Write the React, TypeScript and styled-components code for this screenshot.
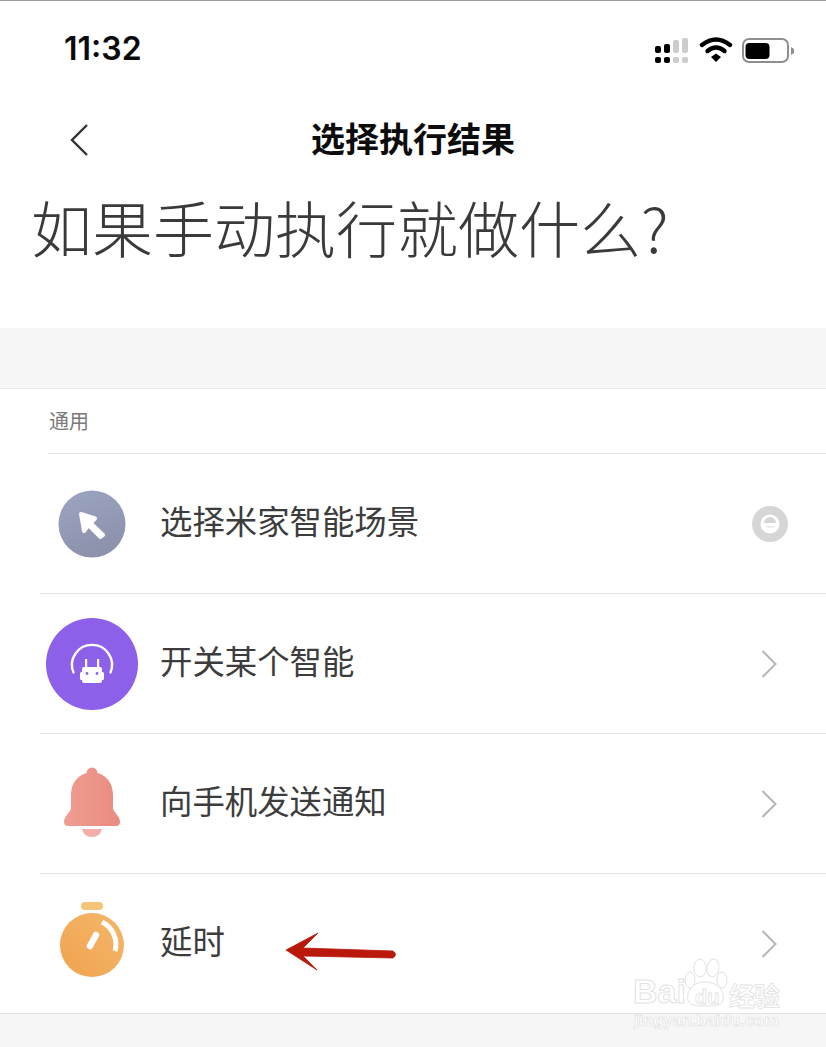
import React from "react";
import styled, { createGlobalStyle } from "styled-components";

const Global = createGlobalStyle`
  html, body { margin: 0; padding: 0; background: #fff; }
  body { font-family: "Noto Sans CJK SC", "Noto Sans", sans-serif; }
`;

const Page = styled.div`
  position: relative;
  width: 826px;
  height: 1047px;
  overflow: hidden;
  background: #f6f6f6;
  display: flex;
  flex-direction: column;
`;

const Header = styled.header`
  background: #fff;
  border-top: 1px solid #9a9a9a;
  height: 327px;
  display: flex;
  flex-direction: column;
`;

const StatusBar = styled.div`
  height: 79px;
  padding: 0 32px 0 64px;
  display: flex;
  align-items: center;
  justify-content: space-between;
`;

const Clock = styled.span`
  font-family: "Inter", "Liberation Sans", sans-serif;
  font-size: 32px;
  font-weight: 600;
  color: #0a0a0a;
  margin-top: 16px;
`;

const StatusIcons = styled.svg`
  display: block;
  margin-top: 18px;
`;

const NavBar = styled.div`
  height: 62px;
  margin-top: 27px;
  display: flex;
  align-items: center;
  justify-content: center;
  position: relative;
`;

const BackIcon = styled.svg`
  position: absolute;
  left: 68px;
  top: 16px;
`;

const Title = styled.h1`
  margin: 0;
  font-size: 34px;
  font-weight: 700;
  color: #0c0c0c;
  line-height: 62px;
`;

const Heading = styled.h2`
  margin: 22px 0 0;
  padding: 0 0 0 31px;
  font-size: 61px;
  font-weight: 300;
  color: #3a3a3a;
  line-height: 72px;
  white-space: nowrap;
`;

const Section = styled.section`
  margin-top: 60px;
  background: #fff;
  border-top: 1px solid #e8e8e8;
  border-bottom: 1px solid #e2e2e2;
`;

const SectionTitle = styled.div`
  margin-left: 48px;
  padding-left: 1px;
  height: 65px;
  box-sizing: border-box;
  border-bottom: 1px solid #e4e4e4;
  font-size: 20px;
  line-height: 64px;
  color: #7a7a7a;
`;

const Row = styled.div<{ $first?: boolean }>`
  height: 139px;
  margin-left: 40px;
  border-top: ${(p) => (p.$first ? "none" : "1px solid #e4e4e4")};
  display: flex;
  align-items: center;
  padding-right: 38px;
`;

const IconSlot = styled.div<{ $lift?: number }>`
  width: 104px;
  flex: none;
  display: flex;
  justify-content: center;
  margin-right: 16px;
  margin-bottom: ${(p) => p.$lift ?? 0}px;
  svg { display: block; }
`;

const Label = styled.span`
  flex: 1;
  font-size: 32.4px;
  color: #3c3c3c;
  line-height: 1;
  margin-bottom: 6px;
`;

const TrailingIcon = styled.svg`
  flex: none;
  display: block;
`;

const ChevronIcon = styled.svg`
  flex: none;
  display: block;
  margin-right: 11px;
`;

const ArrowOverlay = styled.svg`
  position: absolute;
  left: 280px;
  top: 925px;
`;

const Watermark = styled.div`
  position: absolute;
  left: 632px;
  top: 956px;
  width: 190px;
  height: 80px;
  pointer-events: none;
`;

const Paw = styled.svg`
  position: absolute;
  left: 0;
  top: 0;
`;

const WmBai = styled.span`
  position: absolute;
  left: 1px;
  top: 18px;
  font-family: "Liberation Sans", sans-serif;
  font-weight: 700;
  font-size: 34px;
  line-height: 34px;
  color: #fff;
  -webkit-text-stroke: 1px #e2e2e2;
`;

const WmDu = styled.span`
  position: absolute;
  left: 63px;
  top: 30px;
  font-family: "Liberation Sans", sans-serif;
  font-weight: 700;
  font-size: 20px;
  line-height: 22px;
  color: #fff;
  -webkit-text-stroke: 0.8px #e2e2e2;
`;

const WmJing = styled.span`
  position: absolute;
  left: 97px;
  top: 25px;
  font-size: 26px;
  font-weight: 700;
  line-height: 27px;
  letter-spacing: -1px;
  color: #fff;
  -webkit-text-stroke: 0.8px #e2e2e2;
`;

const WmUrl = styled.span`
  position: absolute;
  left: 2px;
  top: 54px;
  font-family: "Liberation Sans", sans-serif;
  font-size: 16.5px;
  line-height: 20px;
  font-weight: 700;
  color: #fff;
  -webkit-text-stroke: 0.7px #e2e2e2;
`;

const Chevron = () => (
  <ChevronIcon width="16" height="28" viewBox="0 0 16 28">
    <path d="M1.5 1 L14.5 14 L1.5 27" fill="none" stroke="#b5b5b5" strokeWidth="2" />
  </ChevronIcon>
);

export default function App() {
  return (
    <Page>
      <Global />
      <Header>
        <StatusBar>
          <Clock>11:32</Clock>
          <StatusIcons width="140" height="30" viewBox="0 0 140 30">
            <g fill="#000">
              <rect x="1" y="11" width="6" height="7" rx="2" />
              <rect x="10" y="9" width="6" height="9" rx="2" />
              <rect x="1" y="22" width="6" height="6" rx="2" />
              <rect x="10" y="22" width="6" height="6" rx="2" />
            </g>
            <g fill="#ccc">
              <rect x="19" y="5" width="6" height="13" rx="2" />
              <rect x="28" y="3" width="6" height="15" rx="2" />
              <rect x="19" y="22" width="6" height="6" rx="2" />
              <rect x="28" y="22" width="6" height="6" rx="2" />
            </g>
            <path d="M48 10 Q62 -1 76 10" fill="none" stroke="#000" strokeWidth="4.4" strokeLinecap="round" />
            <path d="M53.5 16 Q62 9 70.5 16" fill="none" stroke="#000" strokeWidth="4.4" strokeLinecap="round" />
            <path d="M57 22 L62 18.5 L67 22 L62 27 Z" fill="#000" />
            <rect x="89" y="4" width="45" height="23" rx="6" fill="none" stroke="#8e8e8e" strokeWidth="2" />
            <rect x="91.5" y="8" width="24" height="16" rx="4" fill="#000" />
            <path d="M137 12 L140 14 L140 18 L137 20 Z" fill="#8e8e8e" />
          </StatusIcons>
        </StatusBar>
        <NavBar>
          <BackIcon width="24" height="34" viewBox="0 0 24 34">
            <path d="M19 2 L4 17 L19 32" fill="none" stroke="#333" strokeWidth="2.4" />
          </BackIcon>
          <Title>选择执行结果</Title>
        </NavBar>
        <Heading>如果手动执行就做什么?</Heading>
      </Header>
      <Section>
        <SectionTitle>通用</SectionTitle>
        <Row $first>
          <IconSlot>
            <svg width="68" height="68" viewBox="0 0 68 68">
              <defs>
                <linearGradient id="g1" x1="0.3" y1="0" x2="0.7" y2="1">
                  <stop offset="0" stopColor="#9aa3bf" />
                  <stop offset="1" stopColor="#8b90aa" />
                </linearGradient>
              </defs>
              <circle cx="34" cy="34" r="33.5" fill="url(#g1)" />
              <path d="M23 24 L37 28.5 L32.5 33 L45 45 L42.5 47 L30.5 35 L26 41 Z" fill="#fff" stroke="#fff" strokeWidth="4" strokeLinejoin="round" />
            </svg>
          </IconSlot>
          <Label>选择米家智能场景</Label>
          <TrailingIcon width="36" height="36" viewBox="0 0 36 36">
            <circle cx="18" cy="18" r="18" fill="#d6d6d6" />
            <circle cx="18" cy="18" r="9.5" fill="#fff" />
            <path d="M12 17 A6 6 0 0 1 24 17 Z" fill="#d6d6d6" />
            <rect x="14" y="20" width="8" height="1.4" fill="#e6e6e6" />
          </TrailingIcon>
        </Row>
        <Row>
          <IconSlot>
            <svg width="92" height="92" viewBox="0 0 92 92">
              <circle cx="46" cy="46" r="46" fill="#8d60ea" />
              <path d="M27.5 54.5 A20 20 0 1 1 64.5 54.5" fill="none" stroke="#fff" strokeWidth="2.4" strokeLinecap="round" />
              <rect x="39" y="41" width="2.2" height="10" fill="#fff" />
              <rect x="51" y="41" width="2.2" height="10" fill="#fff" />
              <rect x="36" y="49" width="20" height="16" rx="2" fill="#fff" />
              <rect x="34" y="54" width="24" height="8" rx="1.5" fill="#fff" />
              <circle cx="41" cy="55.5" r="1.4" fill="#8d60ea" />
              <circle cx="51" cy="55.5" r="1.4" fill="#8d60ea" />
            </svg>
          </IconSlot>
          <Label>开关某个智能</Label>
          <Chevron />
        </Row>
        <Row>
          <IconSlot $lift={4}>
            <svg width="58" height="72" viewBox="0 0 58 72">
              <defs>
                <linearGradient id="g2" x1="0" y1="0" x2="1" y2="0">
                  <stop offset="0" stopColor="#f09d90" />
                  <stop offset="1" stopColor="#e98b82" />
                </linearGradient>
              </defs>
              <path d="M23.5 7 A5.5 5.5 0 0 1 34.5 7 C44 9.5 50 18 50 29 V42 C50 46 57 50 57 56 C57 59 55 60 53 60 H5 C3 60 1 59 1 56 C1 50 8 46 8 42 V29 C8 18 14 9.5 23.5 7 Z" fill="url(#g2)" />
              <path d="M19 63 H39 C38 68 34 71 29 71 C24 71 20 68 19 63 Z" fill="#f4aeaa" />
            </svg>
          </IconSlot>
          <Label>向手机发送通知</Label>
          <Chevron />
        </Row>
        <Row>
          <IconSlot $lift={8}>
            <svg width="64" height="76" viewBox="0 0 64 76">
              <defs>
                <linearGradient id="g3" x1="0" y1="1" x2="1" y2="0">
                  <stop offset="0" stopColor="#f0a24f" />
                  <stop offset="1" stopColor="#f4b76a" />
                </linearGradient>
              </defs>
              <rect x="21" y="0" width="22" height="8" rx="4" fill="#f6c478" />
              <circle cx="32" cy="43" r="32" fill="url(#g3)" />
              <path d="M42 20 A25 25 0 0 1 55 49" fill="none" stroke="#fff" strokeWidth="5" />
              <path d="M36 33 L30 44" fill="none" stroke="#fff" strokeWidth="6.5" strokeLinecap="round" />
            </svg>
          </IconSlot>
          <Label>延时</Label>
          <Chevron />
        </Row>
      </Section>
      <ArrowOverlay width="120" height="50" viewBox="0 0 120 50">
        <path d="M6 25 L38 8 L23 23 L113 26 Q118 29.5 113 33 L23 31 L37 45 Z" fill="#b9180b" stroke="#b9180b" strokeWidth="0.8" strokeLinejoin="round" />
      </ArrowOverlay>
      <Watermark>
        <Paw width="100" height="60" viewBox="0 0 100 60">
          <g fill="#fff" stroke="#e2e2e2" strokeWidth="1">
            <ellipse cx="68" cy="12" rx="6" ry="9" />
            <ellipse cx="81" cy="12" rx="6" ry="9" transform="rotate(10 81 12)" />
            <ellipse cx="58" cy="24" rx="5" ry="8" />
            <ellipse cx="90" cy="24" rx="5" ry="8" />
            <path d="M56 38 C59 22 87 22 91 38 C93 50 85 50 73 50 C62 50 54 50 56 38 Z" />
          </g>
        </Paw>
        <WmBai>Bai</WmBai>
        <WmDu>du</WmDu>
        <WmJing>经验</WmJing>
        <WmUrl>jingyan.baidu.com</WmUrl>
      </Watermark>
    </Page>
  );
}
